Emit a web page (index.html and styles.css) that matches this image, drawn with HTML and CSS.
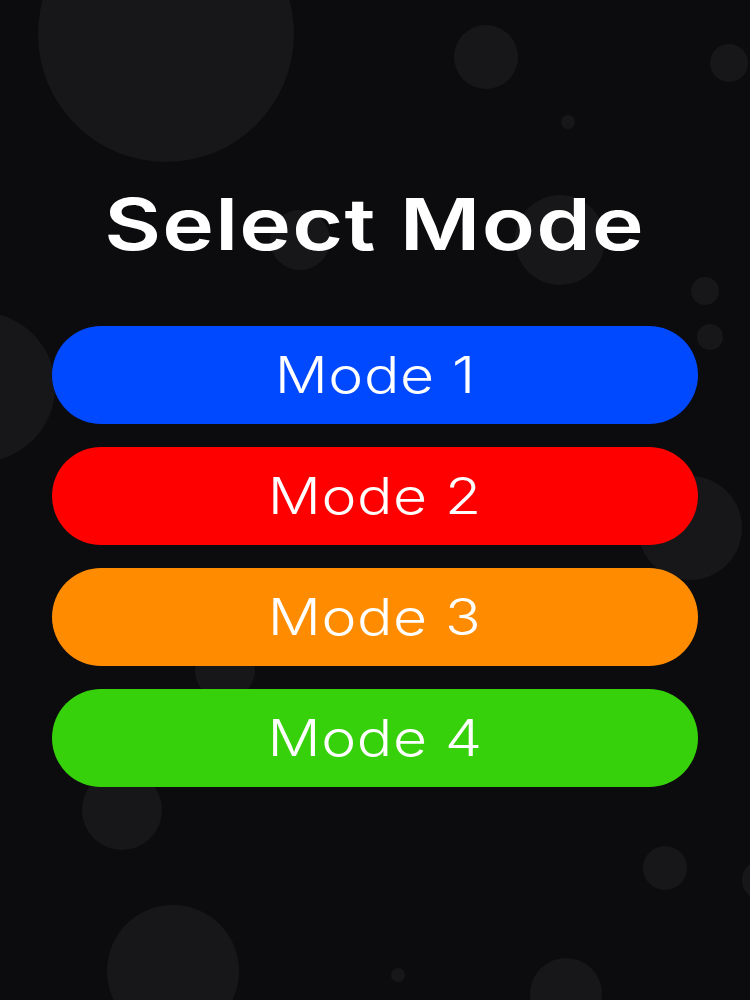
FILE: index.html
```html
<!DOCTYPE html>
<html lang="en">
<head>
<meta charset="utf-8">
<title>Select Mode</title>
<link rel="stylesheet" href="styles.css">
</head>
<body>
<div class="screen">
  <div class="bubbles" aria-hidden="true">
    <span class="bubble" style="left:38px;top:-94px;width:256px;height:256px"></span>
    <span class="bubble" style="left:454px;top:25px;width:64px;height:64px"></span>
    <span class="bubble" style="left:710px;top:44px;width:38px;height:38px"></span>
    <span class="bubble" style="left:561px;top:115px;width:14px;height:14px"></span>
    <span class="bubble" style="left:270px;top:210px;width:60px;height:60px"></span>
    <span class="bubble" style="left:515px;top:195px;width:90px;height:90px"></span>
    <span class="bubble" style="left:691px;top:277px;width:28px;height:28px"></span>
    <span class="bubble" style="left:697px;top:324px;width:26px;height:26px"></span>
    <span class="bubble" style="left:-95px;top:312px;width:150px;height:150px"></span>
    <span class="bubble" style="left:638px;top:476px;width:104px;height:104px"></span>
    <span class="bubble" style="left:195px;top:640px;width:60px;height:60px"></span>
    <span class="bubble" style="left:82px;top:770px;width:80px;height:80px"></span>
    <span class="bubble" style="left:643px;top:846px;width:44px;height:44px"></span>
    <span class="bubble" style="left:107px;top:905px;width:132px;height:132px"></span>
    <span class="bubble" style="left:391px;top:968px;width:14px;height:14px"></span>
    <span class="bubble" style="left:530px;top:958px;width:72px;height:72px"></span>
    <span class="bubble" style="left:742px;top:860px;width:40px;height:40px"></span>
  </div>
  <main class="menu">
    <h1 class="title"><span class="wide wide-title">Select Mode</span></h1>
    <div class="modes">
      <button class="mode mode-blue"><span class="wide">Mode 1</span></button>
      <button class="mode mode-red"><span class="wide">Mode 2</span></button>
      <button class="mode mode-orange"><span class="wide">Mode 3</span></button>
      <button class="mode mode-green"><span class="wide">Mode 4</span></button>
    </div>
  </main>
</div>
</body>
</html>
```

FILE: styles.css
```css
html, body {
  margin: 0;
  padding: 0;
  background: #0c0c0e;
}

.screen {
  position: relative;
  width: 750px;
  height: 1000px;
  overflow: hidden;
  background: #0c0c0e;
  font-family: "Inter", "DejaVu Sans", sans-serif;
}

.bubbles {
  position: absolute;
  inset: 0;
}

.bubble {
  position: absolute;
  border-radius: 50%;
  background: #17171a;
}

.menu {
  position: relative;
  display: flex;
  flex-direction: column;
  align-items: stretch;
  padding: 184px 52px 0;
}

.title {
  margin: 0 0 62px;
  text-align: center;
  color: #ffffff;
  font-family: "Inter", "DejaVu Sans", sans-serif;
  font-size: 72px;
  line-height: 80px;
  font-weight: 600;
  letter-spacing: 1px;
}

.wide {
  display: inline-block;
  transform: scaleX(1.18);
}

.wide-title {
  transform: scaleX(1.215);
}

.modes {
  display: flex;
  flex-direction: column;
  gap: 23px;
}

.mode {
  display: flex;
  align-items: center;
  justify-content: center;
  height: 98px;
  border: none;
  border-radius: 49px;
  color: #ffffff;
  font-family: "Inter", "DejaVu Sans", sans-serif;
  font-size: 50px;
  font-weight: 300;
  letter-spacing: 0.5px;
  padding: 0;
}

.mode-blue { background: #0049ff; }
.mode-red { background: #ff0000; }
.mode-orange { background: #ff8c00; }
.mode-green { background: #36d10b; }
```
